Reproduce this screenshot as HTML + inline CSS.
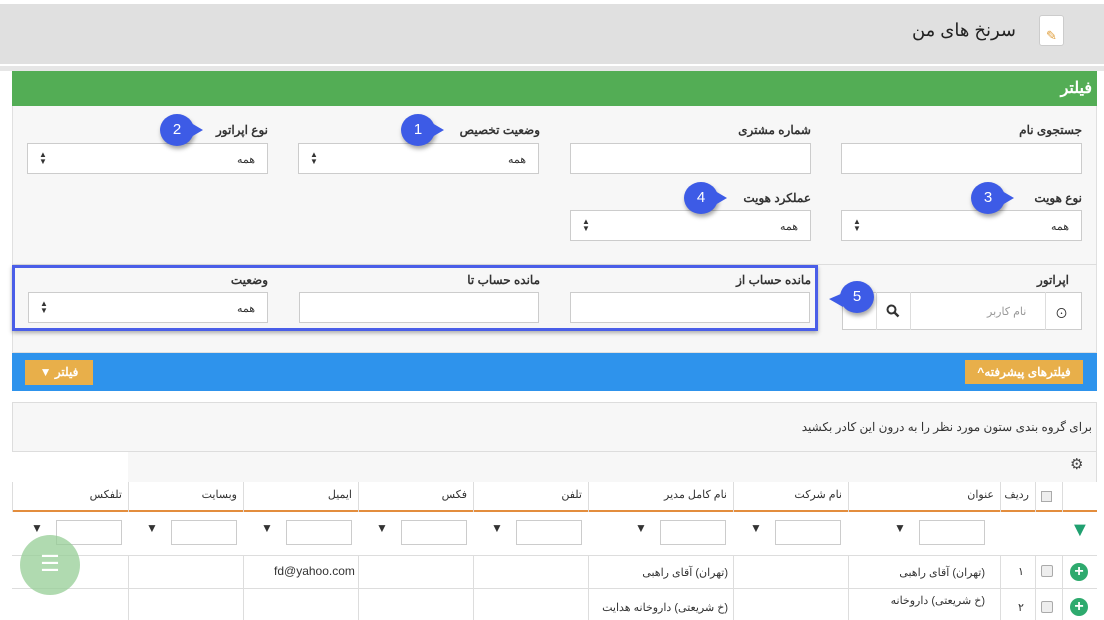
<!DOCTYPE html>
<html><head><meta charset="utf-8"><style>
*{box-sizing:border-box;margin:0;padding:0}
body{width:1104px;height:620px;overflow:hidden;background:#fff;font-family:"Liberation Sans","Noto Sans CJK SC",sans-serif;font-size:12px;color:#333;position:relative}
.a{position:absolute}
.lbl{position:absolute;font-size:12px;font-weight:bold;color:#333;direction:rtl;text-align:right}
.inp{position:absolute;background:#fff;border:1px solid #ccc;height:31px}
.sel{position:absolute;background:#fff;border:1px solid #ccc;height:31px;font-size:11px;color:#333}
.sel .v{position:absolute;right:12px;top:9px}
.sel .ar{position:absolute;left:11px;top:7px;font-size:8px;line-height:7px}
.call{position:absolute;width:34px;height:32px;border-radius:50%;background:#3d5be6;color:#fff;font-size:15px;text-align:center;line-height:32px;box-shadow:1px 3px 4px rgba(0,0,0,.35)}
.call:after{content:"";position:absolute;right:-9px;top:9px;border-left:12px solid #3d5be6;border-top:7px solid transparent;border-bottom:7px solid transparent}
.th{position:absolute;top:482px;height:30px;border-left:1px solid #ddd;font-size:11px;color:#333;text-align:right;padding:6px 6px 0 0;direction:rtl}
.fi{position:absolute;top:520px;width:66px;height:25px;border:1px solid #ccc;background:#fff}
.ft{position:absolute;top:521px;font-size:12px}
.vl{position:absolute;width:1px;background:#ddd}
.td{position:absolute;font-size:11px;direction:rtl}
</style></head><body>
<div class="a" style="left:0;top:4px;width:1104px;height:60px;background:#e0e0e0"></div>
<div class="a" style="left:0;top:64px;width:1104px;height:2px;background:#fff"></div>
<div class="a" style="left:0;top:66px;width:1104px;height:5px;background:#e6e6e6"></div>
<div class="a" style="left:1039px;top:15px;width:25px;height:31px;background:#fff;border:1px solid #ccc;border-radius:3px;color:#e0a040;font-size:13px;text-align:center;line-height:40px">✎</div>
<div class="a" style="right:88px;top:20px;font-size:18px;direction:rtl;color:#222">سرنخ های من</div>
<div class="a" style="left:12px;top:71px;width:1085px;height:35px;background:#53ad55"></div>
<div class="a" style="right:12px;top:78px;font-size:16px;font-weight:bold;color:#fff">فیلتر</div>
<div class="a" style="left:12px;top:106px;width:1085px;height:247px;background:#f7f7f7;border:1px solid #e0e0e0;border-top:none"></div>

<div class="lbl" style="right:22px;top:123px">جستجوی نام</div>
<div class="lbl" style="right:293px;top:123px">شماره مشتری</div>
<div class="lbl" style="right:564px;top:123px">وضعیت تخصیص</div>
<div class="lbl" style="right:836px;top:123px">نوع اپراتور</div>
<div class="inp" style="left:841px;top:143px;width:241px"></div>
<div class="inp" style="left:570px;top:143px;width:241px"></div>
<div class="sel" style="left:298px;top:143px;width:241px"><span class="v">همه</span><span class="ar">▲<br>▼</span></div>
<div class="sel" style="left:27px;top:143px;width:241px"><span class="v">همه</span><span class="ar">▲<br>▼</span></div>

<div class="lbl" style="right:22px;top:191px">نوع هویت</div>
<div class="lbl" style="right:293px;top:191px">عملکرد هویت</div>
<div class="sel" style="left:841px;top:210px;width:241px"><span class="v">همه</span><span class="ar">▲<br>▼</span></div>
<div class="sel" style="left:570px;top:210px;width:241px"><span class="v">همه</span><span class="ar">▲<br>▼</span></div>

<div class="a" style="left:12px;top:264px;width:1085px;height:1px;background:#ddd"></div>
<div class="lbl" style="right:35px;top:273px">اپراتور</div>
<div class="a" style="left:842px;top:292px;width:240px;height:38px;background:#fff;border:1px solid #ccc"></div>
<div class="vl" style="left:876px;top:292px;height:38px"></div>
<div class="vl" style="left:910px;top:292px;height:38px"></div>
<div class="vl" style="left:1045px;top:292px;height:38px"></div>
<div class="a" style="left:1055px;top:303px;font-size:13px">⊙</div>
<div class="a" style="left:987px;top:305px;font-size:11px;color:#999">نام کاربر</div>
<svg class="a" style="left:886px;top:304px" width="14" height="14" viewBox="0 0 14 14"><circle cx="5.5" cy="5.5" r="4" fill="none" stroke="#333" stroke-width="2"/><line x1="8.5" y1="8.5" x2="12.5" y2="12.5" stroke="#333" stroke-width="2.4"/></svg>
<div class="a" style="left:854px;top:303px;font-size:9px;color:#888">⌄</div>

<div class="lbl" style="right:293px;top:273px">مانده حساب از</div>
<div class="lbl" style="right:564px;top:273px">مانده حساب تا</div>
<div class="lbl" style="right:836px;top:273px">وضعیت</div>
<div class="inp" style="left:570px;top:292px;width:240px"></div>
<div class="inp" style="left:299px;top:292px;width:240px"></div>
<div class="sel" style="left:28px;top:292px;width:240px"><span class="v">همه</span><span class="ar">▲<br>▼</span></div>
<div class="a" style="left:12px;top:265px;width:806px;height:66px;border:3px solid #4a5ee8;box-shadow:0 2px 4px rgba(0,0,0,.3)"></div>

<div class="call" style="left:160px;top:114px">2</div>
<div class="call" style="left:401px;top:114px">1</div>
<div class="call" style="left:971px;top:182px">3</div>
<div class="call" style="left:684px;top:182px">4</div>
<div class="a" style="left:840px;top:281px;width:34px;height:32px;border-radius:50%;background:#3d5be6;color:#fff;font-size:15px;text-align:center;line-height:32px;box-shadow:1px 3px 4px rgba(0,0,0,.35)">5</div>
<div class="a" style="left:829px;top:293px;border-right:14px solid #3d5be6;border-top:6px solid transparent;border-bottom:8px solid transparent"></div>

<div class="a" style="left:12px;top:353px;width:1085px;height:38px;background:#2e93ec"></div>
<div class="a" style="left:965px;top:360px;width:118px;height:24px;background:#e8af4a;color:#fff;font-size:12px;font-weight:bold;text-align:center;line-height:24px">^فیلترهای پیشرفته</div>
<div class="a" style="left:25px;top:360px;width:68px;height:25px;background:#e8af4a;color:#fff;font-size:12px;font-weight:bold;text-align:center;line-height:25px">▼ فیلتر</div>

<div class="a" style="left:12px;top:402px;width:1085px;height:218px;background:#f7f7f7;border:1px solid #ddd"></div>
<div class="a" style="right:12px;top:420px;font-size:12px;direction:rtl">برای گروه بندی ستون مورد نظر را به درون این کادر بکشید</div>
<div class="a" style="left:12px;top:451px;width:1085px;height:1px;background:#ddd"></div>
<div class="a" style="left:12px;top:452px;width:116px;height:30px;background:#fff"></div>
<div class="a" style="left:1070px;top:455px;font-size:15px;color:#444">⚙</div>
<div class="a" style="left:12px;top:482px;width:1085px;height:138px;background:#fff"></div>
<div class="a" style="left:12px;top:510px;width:1085px;height:2px;background:#e38d3d"></div>
<div class="th" style="left:1062px;width:35px"></div>
<div class="th" style="left:1035px;width:27px"><span style="display:inline-block;width:11px;height:11px;border:1px solid #aaa;background:#eee;margin:3px 4px 0 0"></span></div>
<div class="th" style="left:1000px;width:35px">ردیف</div>
<div class="th" style="left:848px;width:152px">عنوان</div>
<div class="th" style="left:733px;width:115px">نام شرکت</div>
<div class="th" style="left:588px;width:145px">نام کامل مدیر</div>
<div class="th" style="left:473px;width:115px">تلفن</div>
<div class="th" style="left:358px;width:115px">فکس</div>
<div class="th" style="left:243px;width:115px">ایمیل</div>
<div class="th" style="left:128px;width:115px">وبسایت</div>
<div class="th" style="left:12px;width:116px">تلفکس</div>

<div class="a" style="left:1070px;top:519px;color:#20a070;font-size:20px;font-weight:bold">▼</div>
<div class="fi" style="left:919px"></div><div class="ft" style="left:894px">▼</div>
<div class="fi" style="left:775px"></div><div class="ft" style="left:750px">▼</div>
<div class="fi" style="left:660px"></div><div class="ft" style="left:635px">▼</div>
<div class="fi" style="left:516px"></div><div class="ft" style="left:491px">▼</div>
<div class="fi" style="left:401px"></div><div class="ft" style="left:376px">▼</div>
<div class="fi" style="left:286px"></div><div class="ft" style="left:261px">▼</div>
<div class="fi" style="left:171px"></div><div class="ft" style="left:146px">▼</div>
<div class="fi" style="left:56px"></div><div class="ft" style="left:31px">▼</div>

<div class="a" style="left:12px;top:555px;width:1085px;height:1px;background:#ddd"></div>
<div class="a" style="left:12px;top:588px;width:1085px;height:1px;background:#ddd"></div>
<div class="vl" style="left:128px;top:555px;height:65px"></div>
<div class="vl" style="left:243px;top:555px;height:65px"></div>
<div class="vl" style="left:358px;top:555px;height:65px"></div>
<div class="vl" style="left:473px;top:555px;height:65px"></div>
<div class="vl" style="left:588px;top:555px;height:65px"></div>
<div class="vl" style="left:733px;top:555px;height:65px"></div>
<div class="vl" style="left:848px;top:555px;height:65px"></div>
<div class="vl" style="left:1000px;top:555px;height:65px"></div>
<div class="vl" style="left:1035px;top:555px;height:65px"></div>
<div class="vl" style="left:1062px;top:555px;height:65px"></div>

<div class="a" style="left:1070px;top:563px;width:18px;height:18px;border-radius:50%;background:#2eaa6e;color:#fff;font-size:16px;font-weight:bold;text-align:center;line-height:18px">+</div>
<div class="a" style="left:1041px;top:565px;width:12px;height:12px;border:1px solid #aaa;background:#eee;border-radius:2px"></div>
<div class="a" style="left:1018px;top:565px;font-size:11px">۱</div>
<div class="td" style="right:119px;top:566px">(تهران) آقای راهبی</div>
<div class="td" style="right:376px;top:566px">(تهران) آقای راهبی</div>
<div class="a" style="left:274px;top:564px;font-size:12px">fd@yahoo.com</div>

<div class="a" style="left:1070px;top:598px;width:18px;height:18px;border-radius:50%;background:#2eaa6e;color:#fff;font-size:16px;font-weight:bold;text-align:center;line-height:18px">+</div>
<div class="a" style="left:1041px;top:601px;width:12px;height:12px;border:1px solid #aaa;background:#eee;border-radius:2px"></div>
<div class="a" style="left:1018px;top:601px;font-size:11px">۲</div>
<div class="td" style="right:119px;top:594px">(خ شریعتی) داروخانه</div>
<div class="td" style="right:376px;top:601px">(خ شریعتی) داروخانه هدایت</div>

<div class="a" style="left:20px;top:535px;width:60px;height:60px;border-radius:50%;background:rgba(150,205,150,.75);color:#fff;font-size:22px;text-align:center;line-height:58px">☰</div>
</body></html>
